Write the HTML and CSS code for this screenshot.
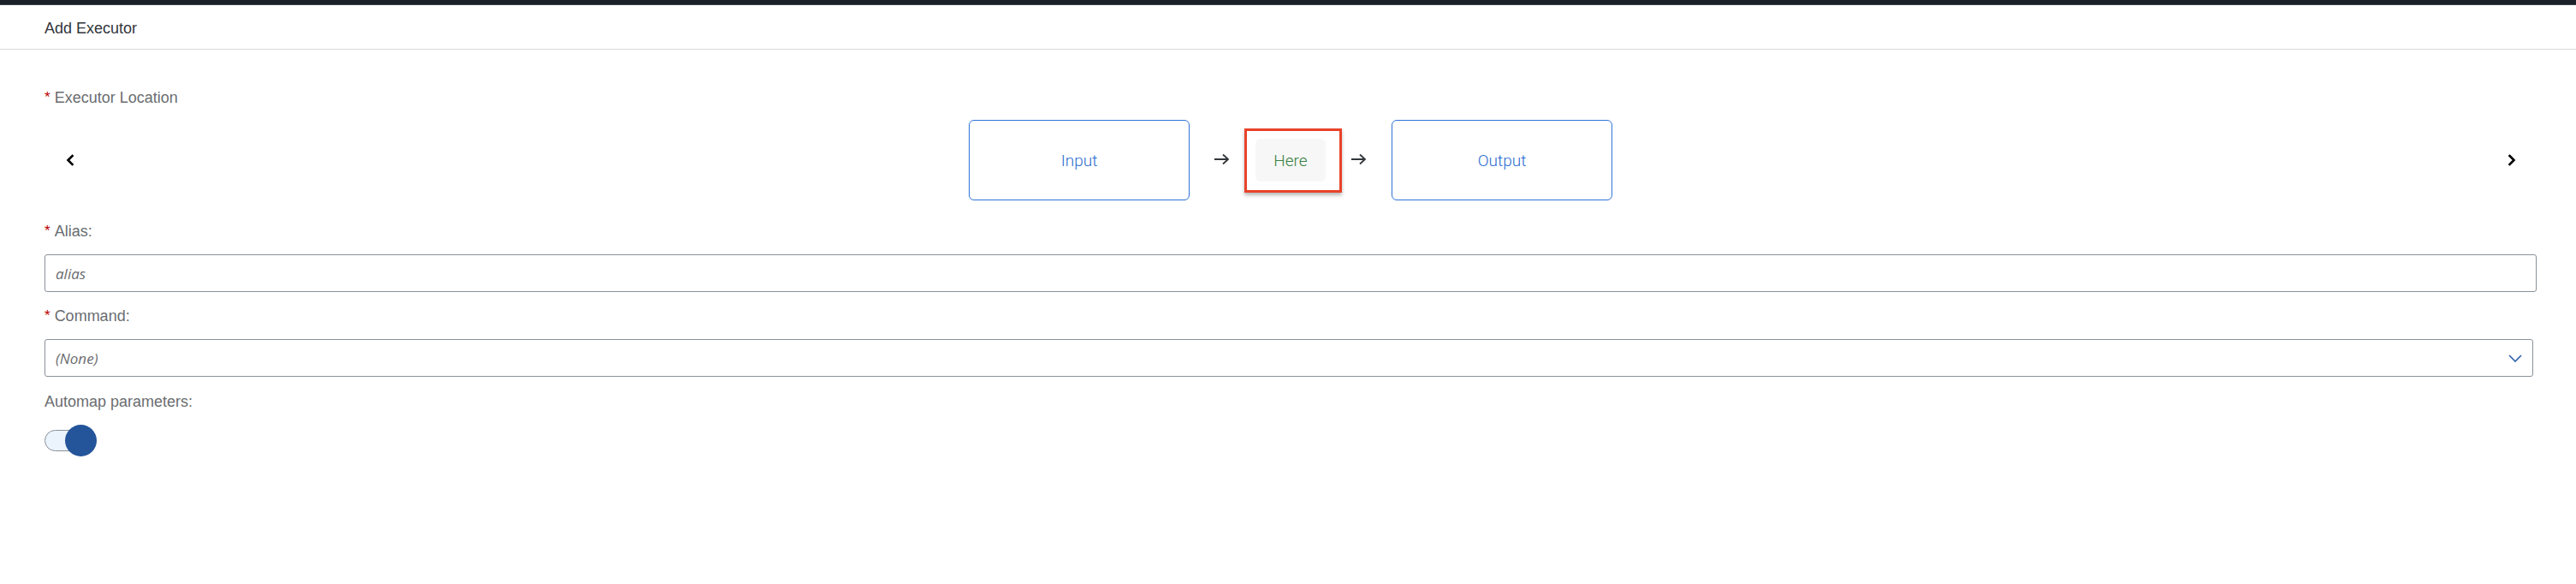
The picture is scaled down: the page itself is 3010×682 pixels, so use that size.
FILE: index.html
```html
<!DOCTYPE html>
<html lang="en">
<head>
<meta charset="utf-8">
<title>Add Executor</title>
<link rel="stylesheet" href="styles.css">
</head>
<body>
<div class="topbar"></div>
<header class="header">
  <span class="title">Add Executor</span>
</header>
<main class="content">
  <div class="label label-location"><span class="req">*</span>Executor Location</div>
  <div class="flow-row">
    <button class="nav-btn" aria-label="Previous">
      <svg width="10" height="14" viewBox="0 0 10 14"><polyline points="7.5,2 2.5,7 7.5,12" fill="none" stroke="#000" stroke-width="2.6" stroke-linecap="square" stroke-linejoin="miter"/></svg>
    </button>
    <div class="flow">
      <div class="node">Input</div>
      <svg class="arrow arrow-a" width="19" height="14" viewBox="0 0 19 14"><path d="M1 7H17M11 1.5L17 7L11 12.5" fill="none" stroke="#32363a" stroke-width="1.8"/></svg>
      <div class="slot">
        <div class="slot-inner">Here</div>
      </div>
      <svg class="arrow arrow-b" width="19" height="14" viewBox="0 0 19 14"><path d="M1 7H17M11 1.5L17 7L11 12.5" fill="none" stroke="#32363a" stroke-width="1.8"/></svg>
      <div class="node">Output</div>
    </div>
    <button class="nav-btn" aria-label="Next">
      <svg width="10" height="14" viewBox="0 0 10 14"><polyline points="2.5,2 7.5,7 2.5,12" fill="none" stroke="#000" stroke-width="2.6" stroke-linecap="square" stroke-linejoin="miter"/></svg>
    </button>
  </div>

  <div class="label label-alias"><span class="req">*</span>Alias:</div>
  <div class="field field-alias"><span class="placeholder">alias</span></div>

  <div class="label label-command"><span class="req">*</span>Command:</div>
  <div class="field field-select">
    <span class="placeholder">(None)</span>
    <svg class="select-arrow" width="16" height="9" viewBox="0 0 16 9"><polyline points="1,1 8,8 15,1" fill="none" stroke="#2a5ea8" stroke-width="1.6"/></svg>
  </div>

  <div class="label label-automap">Automap parameters:</div>
  <div class="toggle">
    <div class="toggle-track"></div>
    <div class="toggle-knob"></div>
  </div>
</main>
</body>
</html>
```

FILE: styles.css
```css
* {
  box-sizing: border-box;
}

html, body {
  margin: 0;
  padding: 0;
  background: #ffffff;
}

body {
  font-family: "Liberation Sans", Arial, sans-serif;
  font-size: 18px;
  color: #32363a;
}

.topbar {
  height: 6px;
  background: #1b2129;
  border-bottom: 1px solid #3a4048;
}

.header {
  height: 53px;
  display: flex;
  align-items: center;
  padding-left: 52px;
  border-bottom: 1px solid #d9d9d9;
  margin-top: -1px;
}

.title {
  font-size: 18px;
  color: #32363a;
  line-height: 24px;
  margin-top: 3px;
}

.content {
  display: flex;
  flex-direction: column;
  padding: 0 46px 0 52px;
}

.label {
  font-size: 18px;
  line-height: 24px;
  color: #6a6d70;
  display: flex;
  align-items: center;
}

.req {
  color: #bb0000;
  margin-right: 5px;
  font-size: 17px;
}

.label-location {
  margin-top: 44px;
}

.flow-row {
  margin-top: 14px;
  height: 94px;
  display: flex;
  align-items: center;
}

.nav-btn {
  width: 59px;
  height: 40px;
  flex: none;
  display: flex;
  align-items: center;
  justify-content: center;
  background: transparent;
  border: 0;
  padding: 0;
}

.flow {
  flex: 1;
  display: flex;
  align-items: center;
  justify-content: center;
  height: 94px;
}

.node {
  width: 258px;
  height: 94px;
  border: 1px solid #2f74d6;
  border-radius: 6px;
  display: flex;
  align-items: center;
  justify-content: center;
  font-family: Roboto, "Liberation Sans", sans-serif;
  font-weight: 300;
  font-size: 19px;
  color: #2a6bd0;
}

.arrow {
  flex: none;
  display: block;
}

.arrow-a {
  margin: -2px 17px 0 28px;
}

.arrow-b {
  margin: -2px 29px 0 10px;
}

.slot {
  width: 114px;
  height: 75px;
  border: 3px solid #e8432a;
  box-shadow: 0 3px 4px rgba(0, 0, 0, 0.28);
  padding: 9px 16px 10px 10px;
  margin-top: 1px;
  display: flex;
}

.slot-inner {
  flex: 1;
  background: #f7f7f7;
  border-radius: 6px;
  display: flex;
  align-items: center;
  justify-content: center;
  font-family: Roboto, "Liberation Sans", sans-serif;
  font-weight: 300;
  font-size: 19px;
  color: #3a8042;
}

.label-alias {
  margin-top: 24px;
}

.field {
  height: 44px;
  border: 1px solid #89919a;
  border-radius: 3px;
  display: flex;
  align-items: center;
  padding: 0 12px;
  background: #ffffff;
}

.field-alias {
  margin-top: 15px;
}

.field-select {
  margin-top: 15px;
  margin-right: 4px;
  justify-content: space-between;
  padding-right: 12px;
}

.placeholder {
  font-family: "Open Sans", "Noto Sans", sans-serif;
  font-style: italic;
  font-size: 17px;
  color: #6a6d70;
}

.select-arrow {
  display: block;
}

.label-command {
  margin-top: 16px;
}

.label-automap {
  margin-top: 17px;
}

.toggle {
  position: relative;
  margin-top: 15px;
  width: 62px;
  height: 37px;
}

.toggle-track {
  position: absolute;
  left: 0;
  top: 6px;
  width: 54px;
  height: 25px;
  border: 1px solid #89919a;
  border-radius: 13px;
  background: #ebf3fc;
}

.toggle-knob {
  position: absolute;
  left: 24px;
  top: 0;
  width: 37px;
  height: 37px;
  border-radius: 50%;
  background: #24559a;
}
```
